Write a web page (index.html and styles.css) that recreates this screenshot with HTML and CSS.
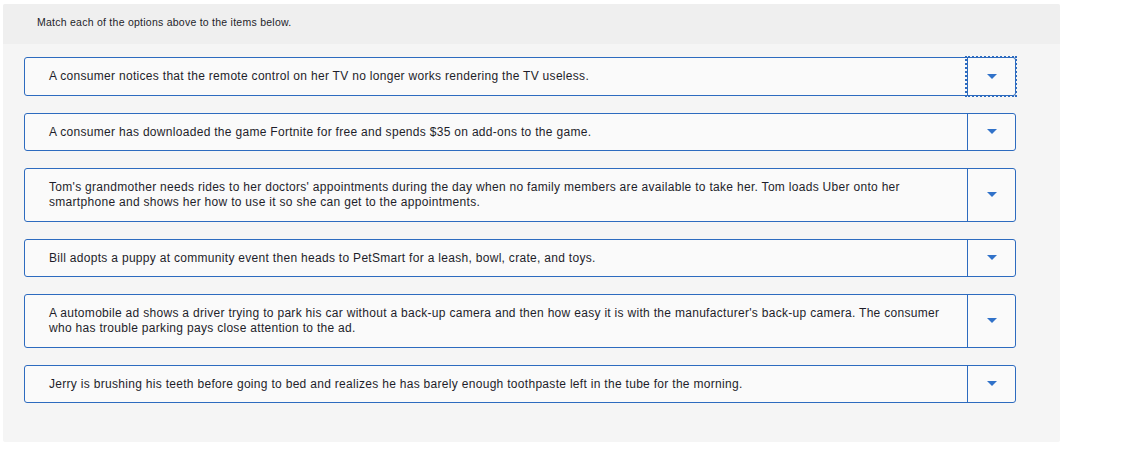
FILE: index.html
```html
<!DOCTYPE html>
<html>
<head>
<meta charset="utf-8">
<link rel="stylesheet" href="styles.css">
</head>
<body>
<div class="panel">
  <div class="prompt">Match each of the options above to the items below.</div>
  <div class="rows">
    <div class="row">
      <div class="text">A consumer notices that the remote control on her TV no longer works rendering the TV useless.</div>
      <div class="drop focused"><span class="arrow"></span></div>
    </div>
    <div class="row">
      <div class="text">A consumer has downloaded the game Fortnite for free and spends $35 on add-ons to the game.</div>
      <div class="drop"><span class="arrow"></span></div>
    </div>
    <div class="row">
      <div class="text">Tom's grandmother needs rides to her doctors' appointments during the day when no family members are available to take her. Tom loads Uber onto her smartphone and shows her how to use it so she can get to the appointments.</div>
      <div class="drop"><span class="arrow"></span></div>
    </div>
    <div class="row">
      <div class="text">Bill adopts a puppy at community event then heads to PetSmart for a leash, bowl, crate, and toys.</div>
      <div class="drop"><span class="arrow"></span></div>
    </div>
    <div class="row">
      <div class="text">A automobile ad shows a driver trying to park his car without a back-up camera and then how easy it is with the manufacturer's back-up camera. The consumer who has trouble parking pays close attention to the ad.</div>
      <div class="drop"><span class="arrow"></span></div>
    </div>
    <div class="row">
      <div class="text">Jerry is brushing his teeth before going to bed and realizes he has barely enough toothpaste left in the tube for the morning.</div>
      <div class="drop"><span class="arrow"></span></div>
    </div>
  </div>
</div>
</body>
</html>
```
FILE: styles.css
```css
html, body {
  margin: 0;
  padding: 0;
  background: #ffffff;
}
body {
  padding: 4px 0 0 3px;
  font-family: "Liberation Sans", Arial, sans-serif;
  color: #1e1e2a;
}
.panel {
  width: 1057px;
  height: 438px;
  background: #f5f5f5;
  border-radius: 2px;
  box-sizing: border-box;
}
.prompt {
  background: #efefef;
  height: 40px;
  box-sizing: border-box;
  padding: 12px 0 0 34px;
  font-size: 10.5px;
  letter-spacing: 0.25px;
  line-height: 13px;
  border-radius: 2px 2px 0 0;
}
.rows {
  display: flex;
  flex-direction: column;
  gap: 17px;
  padding: 13px 0 0 21px;
}
.row {
  display: flex;
  width: 992px;
  box-sizing: border-box;
  border: 1px solid #2d6bbf;
  border-radius: 3px;
  background: #fafafa;
}
.text {
  flex: 1;
  padding: 11px 24px 10.5px 24px;
  font-size: 12px;
  letter-spacing: 0.3px;
  line-height: 15px;
}
.drop {
  width: 47px;
  flex: none;
  border-left: 1px solid #2d6bbf;
  display: flex;
  align-items: center;
  justify-content: center;
  position: relative;
}
.drop.focused {
  outline: 2px dotted #2d6bbf;
  outline-offset: 0px;
}
.arrow {
  width: 0;
  height: 0;
  border-left: 5px solid transparent;
  border-right: 5px solid transparent;
  border-top: 5px solid #3172c9;
  margin-left: 1px;
}
```
